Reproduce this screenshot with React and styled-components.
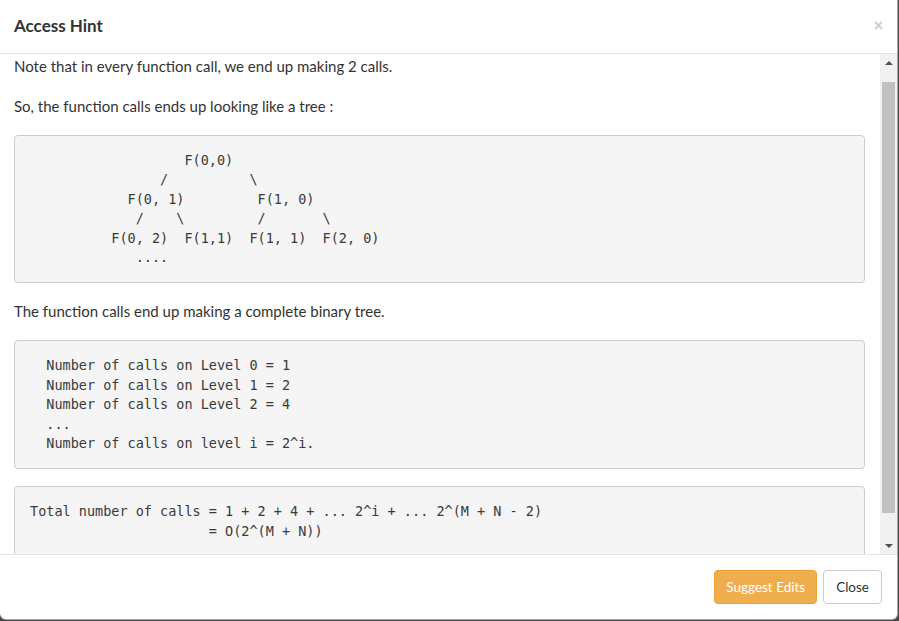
import React, { useLayoutEffect, useRef, useState } from "react";
import styled, { createGlobalStyle } from "styled-components";

const GlobalStyle = createGlobalStyle`
  html, body {
    margin: 0;
    padding: 0;
    background: #474747;
    font-family: "Lato", "Noto Sans", sans-serif;
    color: #333;
  }
  * { box-sizing: border-box; }
`;

const Backdrop = styled.div`
  width: 899px;
  height: 621px;
  background: #474747;
  overflow: hidden;
`;

const Modal = styled.div`
  width: 898px;
  height: 620px;
  background: #fff;
  border-right: 1px solid rgba(0, 0, 0, 0.35);
  border-bottom: 1px solid rgba(0, 0, 0, 0.35);
  border-radius: 0 0 6px 6px;
  display: flex;
  flex-direction: column;
  overflow: hidden;
`;

const Header = styled.div`
  height: 54px;
  flex: none;
  padding: 14px 15px 0 14px;
  border-bottom: 1px solid #e5e5e5;
  display: flex;
  align-items: flex-start;
  justify-content: space-between;
`;

const Title = styled.h4`
  margin: 0;
  font-size: 17px;
  line-height: 24px;
  font-weight: 700;
  color: #333;
`;

const CloseX = styled.button`
  border: 0;
  background: none;
  padding: 0;
  margin: 2px -1px 0 0;
  font-family: "Liberation Sans", sans-serif;
  font-size: 16px;
  line-height: 20px;
  font-weight: 700;
  color: #000;
  opacity: 0.2;
  cursor: pointer;
`;

const Body = styled.div`
  flex: 1;
  min-height: 0;
  display: flex;
`;

const Viewport = styled.div`
  flex: 1;
  overflow: hidden;
  padding: 15px 15px 15px 14px;
`;

const ScrollTrack = styled.div`
  width: 17px;
  flex: none;
  background: #f1f1f1;
  display: flex;
  flex-direction: column;
`;

const ArrowButton = styled.div`
  height: 17px;
  flex: none;
  display: flex;
  align-items: center;
  justify-content: center;

  &::before {
    content: "";
    width: 0;
    height: 0;
    border-left: 4px solid transparent;
    border-right: 4px solid transparent;
    ${(p) =>
      p.$down
        ? "border-top: 4px solid #505050;"
        : "border-bottom: 4px solid #505050;"}
  }
`;

const Rail = styled.div`
  flex: 1;
  padding: 0 2px;
`;

const Thumb = styled.div`
  width: 13px;
  background: #c1c1c1;
`;

const Para = styled.p`
  margin: 0 0 ${(p) => p.$gap || 19}px;
  font-size: 15px;
  line-height: 20px;
  color: #333;
`;

const Code = styled.pre`
  margin: 0 0 ${(p) => p.$gap || 19}px;
  padding: 15px;
  background: #f5f5f5;
  border: 1px solid #ccc;
  border-radius: 4px;
  font-family: "DejaVu Sans Mono", "Liberation Mono", monospace;
  font-size: 13.5px;
  line-height: 19.4px;
  color: #3a3a3a;
  white-space: pre;
  overflow: hidden;
`;

const Footer = styled.div`
  flex: none;
  height: 65px;
  border-top: 1px solid #e5e5e5;
  padding: 0 15px 0 0;
  display: flex;
  align-items: center;
  justify-content: flex-end;
  gap: 6px;
`;

const Button = styled.button`
  height: 34px;
  padding: 0 ${(p) => (p.$warning ? 11 : 12)}px;
  font-family: "Lato", "Noto Sans", sans-serif;
  font-size: 13.5px;
  border-radius: 4px;
  cursor: pointer;
  border: 1px solid ${(p) => (p.$warning ? "#eea236" : "#ccc")};
  background: ${(p) => (p.$warning ? "#f0ad4e" : "#fff")};
  color: ${(p) => (p.$warning ? "#fff" : "#333")};
`;

const tree = [
  "                   F(0,0)",
  "                /          \\",
  "            F(0, 1)         F(1, 0)",
  "             /    \\         /       \\",
  "          F(0, 2)  F(1,1)  F(1, 1)  F(2, 0)",
  "             ....",
].join("\n");

const levels = [
  "  Number of calls on Level 0 = 1",
  "  Number of calls on Level 1 = 2",
  "  Number of calls on Level 2 = 4",
  "  ...",
  "  Number of calls on level i = 2^i.",
].join("\n");

const total = [
  "Total number of calls = 1 + 2 + 4 + ... 2^i + ... 2^(M + N - 2)",
  "                      = O(2^(M + N))",
].join("\n");

const SCROLL_TOP = 13;

export default function App() {
  const viewRef = useRef(null);
  const railRef = useRef(null);
  const [thumb, setThumb] = useState({ top: 0, height: 0 });

  useLayoutEffect(() => {
    const view = viewRef.current;
    const rail = railRef.current;
    if (!view || !rail) return;
    view.scrollTop = SCROLL_TOP;
    const railH = rail.clientHeight;
    const ratio = view.clientHeight / view.scrollHeight;
    setThumb({
      top: Math.round((view.scrollTop / view.scrollHeight) * railH),
      height: Math.round(ratio * railH),
    });
  }, []);

  return (
    <Backdrop>
      <GlobalStyle />
      <Modal>
        <Header>
          <Title>Access Hint</Title>
          <CloseX aria-label="Close">×</CloseX>
        </Header>
        <Body>
          <Viewport ref={viewRef}>
            <Para $gap={20}>Note that in every function call, we end up making 2 calls.</Para>
            <Para>So, the function calls ends up looking like a tree :</Para>
            <Code $gap={18}>{tree}</Code>
            <Para>The function calls end up making a complete binary tree.</Para>
            <Code $gap={17}>{levels}</Code>
            <Code $gap={10}>{total}</Code>
          </Viewport>
          <ScrollTrack>
            <ArrowButton />
            <Rail ref={railRef}>
              <Thumb style={{ marginTop: thumb.top, height: thumb.height }} />
            </Rail>
            <ArrowButton $down />
          </ScrollTrack>
        </Body>
        <Footer>
          <Button $warning>Suggest Edits</Button>
          <Button>Close</Button>
        </Footer>
      </Modal>
    </Backdrop>
  );
}
